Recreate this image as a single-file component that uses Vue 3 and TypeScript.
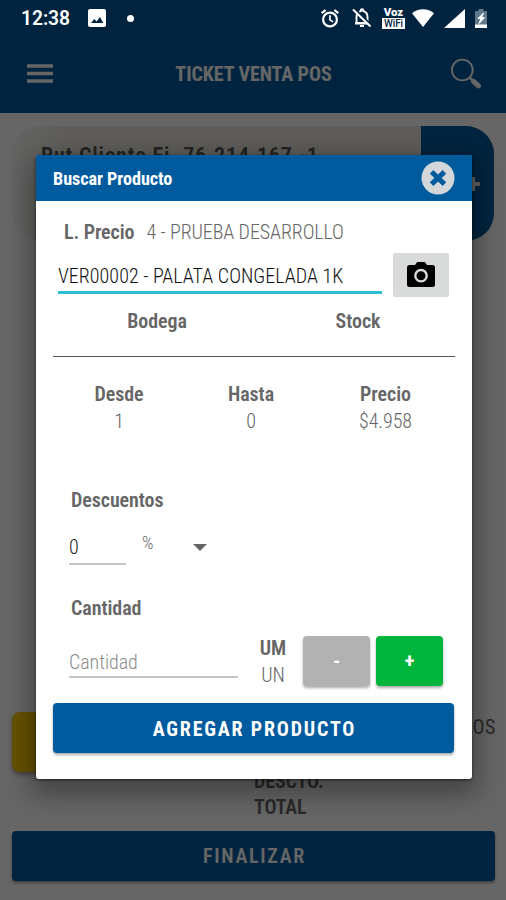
<script setup lang="ts">
import { ref } from 'vue'

interface Tier { label: string; value: string }

const product = ref('VER00002 - PALATA CONGELADA 1K')
const discount = ref('0')
const tiers: Tier[] = [
  { label: 'Desde', value: '1' },
  { label: 'Hasta', value: '0' },
  { label: 'Precio', value: '$4.958' },
]
</script>

<template>
  <div class="screen">
    <div class="page">
      <header class="appbar">
        <svg class="burger" viewBox="0 0 26 20"><path d="M0 2h26M0 9.5h26M0 17h26" stroke="#fff" stroke-width="3.6" /></svg>
        <h1 class="title">TICKET VENTA POS</h1>
        <svg class="search" viewBox="0 0 32 32">
          <circle cx="12.3" cy="12" r="10.4" fill="none" stroke="#fff" stroke-width="1.9" />
          <path d="M19.6 19.5l3.2 3" stroke="#fff" stroke-width="2.4" />
          <path d="M23.5 23.3l5 4.5" stroke="#fff" stroke-width="5" stroke-linecap="round" />
        </svg>
      </header>
      <section class="client">
        <div class="client-name">Rut Cliente Ej. 76.214.167 -1</div>
        <div class="client-add"><svg viewBox="0 0 14 14"><path d="M7 0v14M0 7h14" stroke="#fff" stroke-width="4" /></svg></div>
      </section>
      <section class="summary">
        <div class="yellow"></div>
        <div class="totals"><b>DESCTO.</b><b>TOTAL</b></div>
        <div class="products">PRODUCTOS</div>
      </section>
      <button class="finish">FINALIZAR</button>
    </div>

    <div class="scrim"></div>

    <div class="status">
      <span class="clock">12:38</span>
      <svg class="pic" viewBox="0 0 18 18"><rect width="18" height="18" rx="2" fill="#fff" /><path d="M3 14l3.300-4 2.200 2.400L12 8l3.200 6z" fill="#00243f" /></svg>
      <i class="dot"></i>
      <svg class="alarm" viewBox="0 0 18 19" fill="none" stroke="#fff">
        <circle cx="9" cy="10.500" r="6.900" stroke-width="2.200" /><path d="M9 6.300v4.600l3 2" stroke-width="1.700" /><path d="M.7 4.200L4.600 1M17.300 4.200L13.400 1" stroke-width="2.200" />
      </svg>
      <svg class="bell" viewBox="0 0 20 20">
        <path d="M4.500 15V9c0-3.200 2-5.200 4.300-5.800V2.500c0-1.700 2.600-1.700 2.600 0v.7c2.500.7 4.100 2.800 4.100 5.800v6z" fill="none" stroke="#fff" stroke-width="1.900" />
        <path d="M3 15.500h14M8 18h4" stroke="#fff" stroke-width="2" /><path d="M2.500.5l17 17" stroke="#00243f" stroke-width="2" /><path d="M1 1.500l17.500 17" stroke="#fff" stroke-width="2" />
      </svg>
      <span class="vowifi"><b>Voz</b><em>WiFi</em></span>
      <svg class="wifi" viewBox="0 0 22 18"><path d="M0 4.300C6-1.200 16-1.200 22 4.300L11 18z" fill="#fff" /></svg>
      <svg class="signal" viewBox="0 0 21 19"><path d="M21 0v19H0z" fill="#fff" /></svg>
      <svg class="battery" viewBox="0 0 12 19">
        <path d="M3.500 0h5v2H12v17H0V2h3.500z" fill="#60788b" /><path d="M0 15.500h12V19H0z" fill="#fff" /><path d="M8.500 4L3 9.500h3L4 14.500l5.500-5.800H6.500z" fill="#fff" stroke="#fff" />
      </svg>
    </div>

    <div class="dialog" role="dialog">
      <div class="dialog-head">
        <span class="dialog-title">Buscar Producto</span>
        <svg class="close" viewBox="0 0 34 34"><circle cx="17" cy="17" r="16.500" fill="#d4d7da" /><path d="M12.400 12.600l9.200 8.800M21.600 12.600l-9.200 8.800" stroke="#005a9e" stroke-width="5" stroke-linecap="square" /></svg>
      </div>
      <div class="pricelist"><b>L. Precio</b><span>4 - PRUEBA DESARROLLO</span></div>
      <div class="finder">
        <div class="finder-field">{{ product }}</div>
        <button class="camera">
          <svg viewBox="0 0 28 25"><path d="M2.500 3H8l2.200-3h7.600L20 3h5.500Q28 3 28 5.500v17q0 2.500-2.500 2.500h-23Q0 25 0 22.500v-17Q0 3 2.500 3z" /><circle cx="14" cy="13.700" r="5.700" fill="none" stroke="#d9dbdb" stroke-width="2.400" /></svg>
        </button>
      </div>
      <div class="stock"><b>Bodega</b><b>Stock</b></div>
      <div class="tiers">
        <div v-for="t in tiers" :key="t.label" class="tier"><b>{{ t.label }}</b><span>{{ t.value }}</span></div>
      </div>
      <b class="label discount-label">Descuentos</b>
      <div class="discount">
        <div class="discount-field">{{ discount }}</div>
        <span class="percent">%</span>
        <i class="caret"></i>
      </div>
      <b class="label quantity-label">Cantidad</b>
      <div class="quantity">
        <div class="quantity-field">Cantidad</div>
        <div class="unit"><b>UM</b><span>UN</span></div>
        <button class="step minus">-</button>
        <button class="step plus">+</button>
      </div>
      <button class="submit">AGREGAR PRODUCTO</button>
    </div>
  </div>
</template>

<style>
body { margin: 0; overflow: hidden; }
</style>

<style scoped>
* { box-sizing: border-box; }
.screen { position: relative; width: 506px; height: 900px; overflow: hidden; font-family: "Roboto Condensed", Roboto, sans-serif; font-stretch: 75%; font-size: 20px; letter-spacing: -.07px; line-height: 26px; color: #666; white-space: nowrap; }
b { font-weight: 650; color: #666; }
svg { display: block; flex: none; }
button { border: 0; padding: 0; font: inherit; font-stretch: 75%; display: flex; align-items: center; justify-content: center; }
.page { height: 900px; display: flex; flex-direction: column; background: #fff; }
.appbar { height: 113px; padding: 35px 24px 0 27px; background: #005a9e; display: flex; align-items: center; justify-content: space-between; flex: none; }
.burger { width: 26px; height: 20px; }
.title { margin: 0 0 0 4px; font-size: 20px; font-weight: 700; color: #fff; }
.search { width: 32px; height: 32px; }
.client { margin: 13px 12px 0; height: 115px; border-radius: 28px; overflow: hidden; display: flex; flex: none; background: linear-gradient(90deg, #f9f9f7, #ebe7db 14%, #ebe7db); }
.client-name { flex: 1; padding: 17px 0 0 29px; font-size: 22px; font-weight: 650; letter-spacing: .83px; color: #555; }
.client-add { width: 73px; background: #005a9e; display: flex; align-items: center; justify-content: center; padding-left: 31px; }
.client-add svg { width: 14px; height: 14px; }
.summary { margin: 471px 10px 0 12px; height: 119px; display: grid; grid-template-columns: 242px 1fr auto; flex: none; }
.yellow { width: 150px; height: 60px; border-radius: 8px; background: #ffcc00; box-shadow: 0 3px 4px #0005; }
.totals { padding-top: 56px; display: flex; flex-direction: column; }
.products { padding-top: 2px; letter-spacing: .6px; }
.finish { margin: 0 11px 0 12px; padding-left: 2px; height: 50px; flex: none; border-radius: 4px; background: #005a9e; color: #fff; font-weight: 650; letter-spacing: 1.700px; box-shadow: 0 2px 3px #0006; }
.scrim { position: absolute; inset: 0; background: rgba(0, 0, 0, .6); }
.status { position: absolute; top: 0; left: 0; width: 506px; height: 36px; padding: 0 19px 0 21px; display: flex; align-items: center; color: #fff; }
.clock { width: 67px; padding-top: 2px; font-family: Roboto, sans-serif; font-size: 19.300px; font-weight: 600; font-stretch: 100%; }
.pic { width: 18px; height: 18px; }
.dot { width: 7px; height: 7px; border-radius: 50%; background: #fff; margin-left: 21px; }
.alarm { width: 18px; height: 19px; margin-left: auto; }
.bell { width: 20px; height: 20px; margin-left: 13px; }
.vowifi { width: 23px; margin: 0 7px 0 10px; display: flex; flex-direction: column; font-family: Roboto, sans-serif; font-stretch: 100%; }
.vowifi b { color: #fff; font-size: 11.500px; line-height: 11px; font-weight: 900; text-align: center; }
.vowifi em { background: #fff; color: #00243f; font: 500 10px/11px Roboto, sans-serif; text-align: center; }
.wifi { width: 22px; height: 18px; }
.signal { width: 21px; height: 19px; margin-left: 10px; }
.battery { width: 12px; height: 19px; margin-left: 10px; }
.dialog { position: absolute; left: 36px; top: 155px; width: 435.500px; height: 624px; background: #fff; border-radius: 3px; box-shadow: 0 10px 26px 6px #0005, 0 1px 3px #0008; display: flex; flex-direction: column; padding: 0 17px; }
.dialog-head { margin: 0 -17px; padding: 0 17px; height: 46px; flex: none; background: #005a9e; display: flex; align-items: center; justify-content: space-between; border-radius: 2px 2px 0 0; }
.dialog-title { color: #fff; font-weight: 700; font-size: 18.200px; padding-top: 2px; }
.close { width: 34px; height: 34px; }
.pricelist { height: 26px; margin: 18px 0 0 11px; display: flex; gap: 12px; flex: none; }
.pricelist span { font-weight: 300; letter-spacing: -.1px; }
.finder { margin: 8px 5px 0; display: flex; gap: 11.500px; flex: none; height: 45px; }
.finder-field { width: 323.500px; height: 39px; margin-top: 2px; border-bottom: 3px solid #2dbcd4; line-height: 43px; color: #111; font-weight: 300; letter-spacing: .03px; }
.camera { width: 56px; height: 44px; border-radius: 2px; background: #d9dbdb; }
.camera svg { width: 28px; height: 25px; margin-top: -1px; }
.stock { height: 59px; padding-top: 10px; border-bottom: 1px solid #555; flex: none; display: grid; grid-template-columns: 208px 194px; text-align: center; }
.tiers { height: 104px; padding-top: 24px; flex: none; display: grid; grid-template-columns: 132px 132px 137px; }
.tier { display: flex; flex-direction: column; align-items: center; line-height: 26px; }
.tier span { font-weight: 300; padding-top: 1px; }
.label { margin-left: 18px; flex: none; height: 26px; }
.discount-label { margin-top: 26px; }
.discount { margin: 13px 0 0 16px; height: 39px; display: flex; flex: none; }
.discount-field { width: 57px; border-bottom: 2px solid #c4c4c4; line-height: 43px; color: #222; font-weight: 350; }
.percent { margin: 4px 0 0 16px; width: 51px; font-size: 18px; line-height: 26px; font-weight: 350; }
.caret { width: 0; height: 0; margin-top: 18px; border: 7px solid transparent; border-top-color: #666; border-bottom: 0; }
.quantity-label { margin-top: 30px; }
.quantity { margin: 13px 0 0 16px; display: flex; flex: none; height: 53px; }
.quantity-field { width: 169px; height: 44px; border-bottom: 2px solid #c4c4c4; line-height: 56px; color: #8c8c8c; font-weight: 300; }
.unit { width: 65px; padding: 1px 0 0 5px; display: flex; flex-direction: column; align-items: center; }
.unit span { font-weight: 300; padding-top: 1px; }
.step { width: 67px; height: 50px; margin-top: 2px; border-radius: 4px; color: #fff; font-weight: 700; box-shadow: 0 2px 3px #0005; }
.minus { background: #b2b2b2; margin-right: 6px; }
.plus { background: #00b53c; }
.submit { margin-top: 16px; padding: 2px 0 0 2px; width: 401px; height: 50px; flex: none; border-radius: 4px; background: #005a9e; color: #fff; font-weight: 700; letter-spacing: 1.800px; box-shadow: 0 2px 3px #0005; }
</style>
